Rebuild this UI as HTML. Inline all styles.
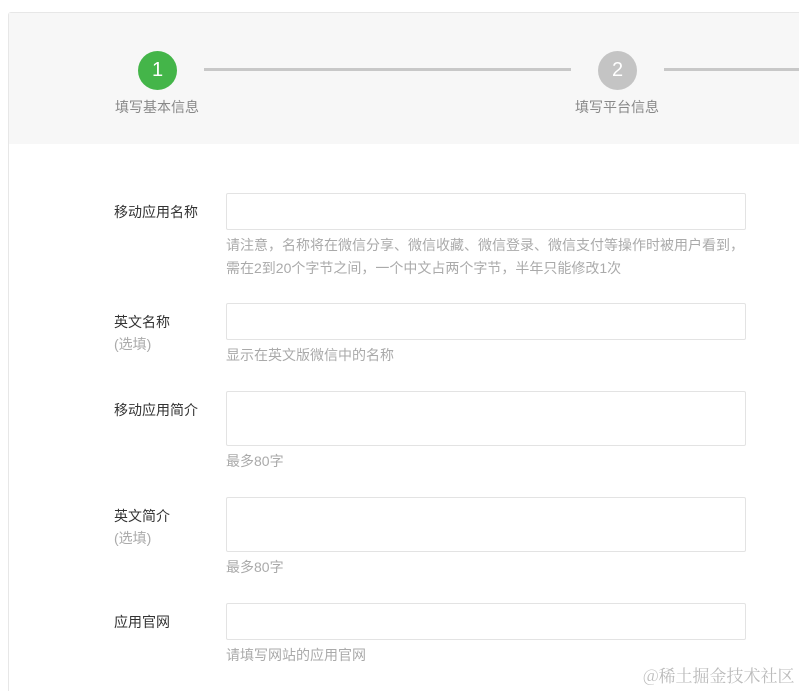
<!DOCTYPE html>
<html><head><meta charset="utf-8"><style>
html,body{margin:0;width:799px;height:691px;overflow:hidden}
body{background:#fff;font-family:"Liberation Sans","Noto Sans CJK SC",sans-serif;position:relative}
.box{position:absolute;left:8px;top:12px;width:800px;height:700px;border:1px solid #e7e7e7;border-radius:3px;background:#fff}
.head{position:absolute;left:9px;top:13px;width:800px;height:131px;background:#f7f7f7}
.c{position:absolute;width:39px;height:39px;border-radius:50%;color:#fff;font-size:20px;text-align:center;line-height:39px}
.line{position:absolute;height:3px;background:#c8c8c8;top:68px}
.st{position:absolute;font-size:14px;color:#888;top:97px}
.lb{position:absolute;left:114px;font-size:14px;color:#333;line-height:22px}
.lb span{color:#aaa}
.in{position:absolute;left:226px;width:518px;border:1px solid #e3e3e3;border-radius:2px;background:#fff}
.h{position:absolute;left:226px;font-size:14px;color:#aaa;line-height:23px}
.wm{position:absolute;left:643px;top:662px;font-size:17px;color:#bbb;font-family:"Noto Serif CJK SC",serif}
</style></head><body>
<div class="box"></div>
<div class="head"></div>
<div class="c" style="left:138px;top:51px;background:#44b549">1</div>
<div class="line" style="left:204px;width:367px"></div>
<div class="c" style="left:598px;top:51px;background:#c4c4c4">2</div>
<div class="line" style="left:664px;width:140px"></div>
<div class="st" style="left:115px">填写基本信息</div>
<div class="st" style="left:575px">填写平台信息</div>

<div class="lb" style="top:201px">移动应用名称</div>
<div class="in" style="top:193px;height:35px"></div>
<div class="h" style="top:234px">请注意，名称将在微信分享、微信收藏、微信登录、微信支付等操作时被用户看到，<br>需在2到20个字节之间，一个中文占两个字节，半年只能修改1次</div>

<div class="lb" style="top:311px">英文名称<br><span>(选填)</span></div>
<div class="in" style="top:303px;height:35px"></div>
<div class="h" style="top:344px">显示在英文版微信中的名称</div>

<div class="lb" style="top:399px">移动应用简介</div>
<div class="in" style="top:391px;height:53px"></div>
<div class="h" style="top:450px">最多80字</div>

<div class="lb" style="top:505px">英文简介<br><span>(选填)</span></div>
<div class="in" style="top:497px;height:53px"></div>
<div class="h" style="top:556px">最多80字</div>

<div class="lb" style="top:611px">应用官网</div>
<div class="in" style="top:603px;height:35px"></div>
<div class="h" style="top:644px">请填写网站的应用官网</div>

<div class="wm">@稀土掘金技术社区</div>
</body></html>
